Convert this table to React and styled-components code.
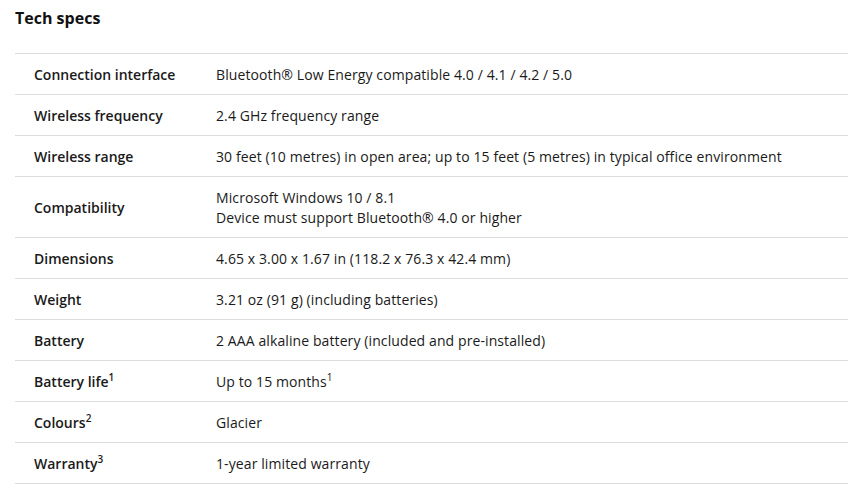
import React from 'react'
import styled, { createGlobalStyle } from 'styled-components'

const GlobalStyle = createGlobalStyle`
  body {
    margin: 0;
    background: #fff;
    font-family: 'Open Sans', 'Noto Sans', sans-serif;
    color: #1a1a1a;
  }
`

const Page = styled.section`
  padding: 8px 16px 0 15px;
  width: 833px;
`

const Title = styled.h2`
  margin: 0 0 25px;
  font-size: 16px;
  font-weight: 700;
  line-height: 20px;
  color: #111;
`

const Table = styled.dl`
  margin: 0;
  border-bottom: 1px solid #dcdcdc;
`

const Row = styled.div`
  display: grid;
  grid-template-columns: 182px 1fr;
  align-items: center;
  min-height: 39px;
  padding: 1px 0 0 19px;
  border-top: 1px solid #dcdcdc;
`

const Label = styled.dt`
  font-size: 14px;
  font-weight: 600;
  line-height: 20px;
`

const Value = styled.dd`
  margin: 0;
  padding: ${p => (p.multi ? '10px 0 9px' : '0')};
  font-size: 14px;
  line-height: 20px;
  letter-spacing: 0.1px;
`

const Sup = styled.sup`
  font-size: 10px;
  line-height: 0;
  vertical-align: 6px;
`

const specs = [
  { label: 'Connection interface', value: ['Bluetooth® Low Energy compatible 4.0 / 4.1 / 4.2 / 5.0'] },
  { label: 'Wireless frequency', value: ['2.4 GHz frequency range'] },
  { label: 'Wireless range', value: ['30 feet (10 metres) in open area; up to 15 feet (5 metres) in typical office environment'] },
  { label: 'Compatibility', value: ['Microsoft Windows 10 / 8.1', 'Device must support Bluetooth® 4.0 or higher'] },
  { label: 'Dimensions', value: ['4.65 x 3.00 x 1.67 in (118.2 x 76.3 x 42.4 mm)'] },
  { label: 'Weight', value: ['3.21 oz (91 g) (including batteries)'] },
  { label: 'Battery', value: ['2 AAA alkaline battery (included and pre-installed)'] },
  { label: 'Battery life', note: '1', value: ['Up to 15 months'], valueNote: '1' },
  { label: 'Colours', note: '2', value: ['Glacier'] },
  { label: 'Warranty', note: '3', value: ['1-year limited warranty'] },
]

const App = () => (
  <Page>
    <GlobalStyle />
    <Title>Tech specs</Title>
    <Table>
      {specs.map(spec => (
        <Row key={spec.label}>
          <Label>
            {spec.label}
            {spec.note && <Sup>{spec.note}</Sup>}
          </Label>
          <Value multi={spec.value.length > 1}>
            {spec.value.map((line, i) => (
              <div key={i}>
                {line}
                {spec.valueNote && <Sup>{spec.valueNote}</Sup>}
              </div>
            ))}
          </Value>
        </Row>
      ))}
    </Table>
  </Page>
)

export default App
